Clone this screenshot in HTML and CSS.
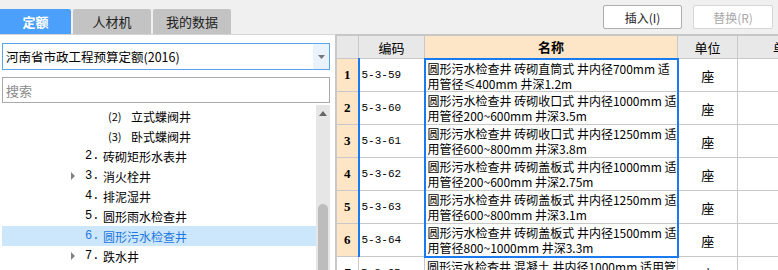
FILE: index.html
```html
<!DOCTYPE html>
<html lang="zh">
<head>
<meta charset="utf-8">
<link rel="stylesheet" href="styles.css">
</head>
<body>
<div class="app">
  <div class="left">
    <div class="tabs">
      <div class="tab active">定额</div>
      <div class="tab">人材机</div>
      <div class="tab">我的数据</div>
    </div>
    <div class="panel">
      <div class="select">
        <span class="select-text">河南省市政工程预算定额(2016)</span>
        <span class="select-btn"><svg width="7" height="4" viewBox="0 0 7 4"><path d="M0 0h7L3.5 4z" fill="#777"/></svg></span>
      </div>
      <div class="search">搜索</div>
      <div class="tree-wrap">
        <div class="tree">
          <div class="node sub"><span class="num">(2)</span><span>立式蝶阀井</span></div>
          <div class="node sub"><span class="num">(3)</span><span>卧式蝶阀井</span></div>
          <div class="node"><span class="arrow"></span><span class="num">2.</span><span>砖砌矩形水表井</span></div>
          <div class="node"><span class="arrow on"></span><span class="num">3.</span><span>消火栓井</span></div>
          <div class="node"><span class="arrow"></span><span class="num">4.</span><span>排泥湿井</span></div>
          <div class="node"><span class="arrow"></span><span class="num">5.</span><span>圆形雨水检查井</span></div>
          <div class="node selected"><span class="arrow"></span><span class="num">6.</span><span>圆形污水检查井</span></div>
          <div class="node"><span class="arrow on"></span><span class="num">7.</span><span>跌水井</span></div>
          <div class="node"><span class="arrow"></span><span class="num">8.</span><span>污水闸槽井</span></div>
        </div>
        <div class="scrollbar">
          <svg class="up" width="8" height="5" viewBox="0 0 8 5"><path d="M0 5L4 0l4 5z" fill="#666"/></svg>
          <div class="thumb"></div>
        </div>
      </div>
    </div>
  </div>
  <div class="right">
    <div class="toolbar">
      <button class="btn">插入(I)</button>
      <button class="btn disabled">替换(R)</button>
    </div>
    <div class="grid-wrap">
      <table class="grid">
        <colgroup>
          <col class="c-rn"><col class="c-code"><col class="c-name"><col class="c-unit"><col class="c-extra">
        </colgroup>
        <thead>
          <tr><th></th><th>编码</th><th class="h-name">名称</th><th>单位</th><th class="h-extra">单</th></tr>
        </thead>
        <tbody>
          <tr class="sel first"><td class="rn">1</td><td class="code">5-3-59</td><td class="name">圆形污水检查井 砖砌直筒式 井内径700mm 适用管径≤400mm 井深1.2m</td><td class="unit">座</td><td></td></tr>
          <tr class="sel"><td class="rn">2</td><td class="code">5-3-60</td><td class="name">圆形污水检查井 砖砌收口式 井内径1000mm 适用管径200~600mm 井深3.5m</td><td class="unit">座</td><td></td></tr>
          <tr class="sel"><td class="rn">3</td><td class="code">5-3-61</td><td class="name">圆形污水检查井 砖砌收口式 井内径1250mm 适用管径600~800mm 井深3.8m</td><td class="unit">座</td><td></td></tr>
          <tr class="sel"><td class="rn">4</td><td class="code">5-3-62</td><td class="name">圆形污水检查井 砖砌盖板式 井内径1000mm 适用管径200~600mm 井深2.75m</td><td class="unit">座</td><td></td></tr>
          <tr class="sel"><td class="rn">5</td><td class="code">5-3-63</td><td class="name">圆形污水检查井 砖砌盖板式 井内径1250mm 适用管径600~800mm 井深3.1m</td><td class="unit">座</td><td></td></tr>
          <tr class="sel last"><td class="rn">6</td><td class="code">5-3-64</td><td class="name">圆形污水检查井 砖砌盖板式 井内径1500mm 适用管径800~1000mm 井深3.3m</td><td class="unit">座</td><td></td></tr>
          <tr class="plain"><td class="rn">7</td><td class="code">5-3-65</td><td class="name">圆形污水检查井 混凝土 井内径1000mm 适用管径200~600mm 井深2.5m</td><td class="unit">座</td><td></td></tr>
        </tbody>
      </table>
    </div>
  </div>
</div>
</body>
</html>
```

FILE: styles.css
```css
* { box-sizing: border-box; }
html, body {
  margin: 0;
  padding: 0;
  width: 778px;
  height: 270px;
  overflow: hidden;
  background: #f0f0f0;
  font-family: "Noto Sans CJK SC", "DejaVu Sans", sans-serif;
  font-size: 12px;
  color: #000;
}
.app {
  display: flex;
  height: 270px;
}
.left {
  width: 336px;
  flex: none;
  display: flex;
  flex-direction: column;
}
.tabs {
  height: 34px;
  padding-top: 9px;
  display: flex;
  gap: 2px;
  align-items: stretch;
}
.tab {
  width: 78px;
  background: #c3c3c3;
  display: flex;
  align-items: center;
  justify-content: center;
  font-size: 13px;
  color: #222;
  border-top-left-radius: 2px;
  border-top-right-radius: 2px;
}
.tab.active {
  width: 71px;
  background: #4aa0fb;
  color: #fff;
  font-weight: bold;
  border-radius: 0 2px 0 0;
}
.panel {
  flex: 1;
  background: #fff;
  border-top: 1px solid #d6d6d6;
  border-right: 1px solid #c8c8c8;
  padding: 8px 5px 0 2px;
  display: flex;
  flex-direction: column;
  min-height: 0;
}
.select {
  height: 27px;
  border: 1px solid #5aa3ee;
  display: flex;
  align-items: stretch;
}
.select-text {
  flex: 1;
  padding-left: 3px;
  display: flex;
  align-items: center;
  font-size: 12.5px;
}
.select-btn {
  width: 16px;
  background: #eaf2fc;
  display: flex;
  align-items: center;
  justify-content: center;
}
.search {
  margin-top: 7px;
  height: 26px;
  border: 1px solid #a9a9a9;
  color: #8a8a8a;
  padding-left: 3px;
  display: flex;
  align-items: center;
  font-size: 13px;
}
.tree-wrap {
  flex: 1;
  display: flex;
  margin-top: 2px;
  min-height: 0;
  overflow: hidden;
}
.tree {
  flex: 1;
  padding-top: 1px;
}
.node {
  height: 20px;
  display: flex;
  align-items: center;
  padding-left: 67px;
  white-space: nowrap;
}
.node .arrow {
  width: 16px;
  height: 20px;
  display: flex;
  align-items: center;
}
.node .arrow.on::before {
  content: "";
  display: block;
  width: 0;
  height: 0;
  border-left: 4px solid #808080;
  border-top: 4px solid transparent;
  border-bottom: 4px solid transparent;
  margin-left: 2px;
}
.node .num {
  width: 18px;
  font-family: "Liberation Mono", monospace;
  font-size: 12px;
}
.node.sub {
  padding-left: 106px;
}
.node.sub .num {
  width: 23px;
  font-family: "Noto Sans CJK SC", sans-serif;
  font-size: 11px;
}
.node.selected {
  background: #cce6fb;
  color: #1e78e0;
}
.scrollbar {
  width: 14px;
  flex: none;
  background: #e6e6e6;
  display: flex;
  flex-direction: column;
  align-items: center;
  padding-top: 6px;
}
.thumb {
  margin-top: 88px;
  width: 10px;
  flex: 1;
  background: #bdbdbd;
  border-radius: 5px 5px 0 0;
}
.right {
  flex: 1;
  display: flex;
  flex-direction: column;
  min-width: 0;
}
.toolbar {
  height: 34px;
  display: flex;
  justify-content: flex-end;
  align-items: flex-start;
  gap: 11px;
  padding: 5px 5px 0 0;
}
.btn {
  width: 79px;
  height: 24px;
  background: #fff;
  border: 1px solid #adadad;
  border-radius: 2px;
  font-family: "Noto Sans CJK SC", sans-serif;
  font-size: 12px;
  color: #222;
  padding: 0;
}
.btn.disabled {
  width: 80px;
  border-color: #d6d6d6;
  color: #a8a8a8;
}
.grid-wrap {
  flex: 1;
  background: #fff;
  overflow: hidden;
  border-top: 1px solid #c6c6c6;
}
.grid {
  border-collapse: collapse;
  table-layout: fixed;
  width: 460px;
}
.c-rn { width: 22px; }
.c-code { width: 66px; }
.c-name { width: 253px; }
.c-unit { width: 60px; }
.c-extra { width: 59px; }
.grid th, .grid td {
  border: 1px solid #c8c8c8;
  padding: 0;
  overflow: hidden;
}
.grid th {
  height: 23px;
  background: #e8e8e8;
  font-weight: normal;
  font-size: 13px;
  text-align: center;
  white-space: nowrap;
}
.grid th.h-name {
  background: #fde6c8;
  font-weight: bold;
}
.grid th.h-extra { text-align: left; padding-left: 35px; }
.grid td {
  height: 33px;
  vertical-align: middle;
}
.grid td.rn {
  background: #fde5c6;
  text-align: center;
  font-family: "Liberation Serif", serif;
  font-weight: bold;
  font-size: 13px;
}
.grid tr.plain td.rn { background: #fff; }
.grid td.code {
  padding-left: 2px;
  vertical-align: middle;
  font-family: "Liberation Mono", monospace;
  font-size: 11px;
  white-space: nowrap;
}
.grid td.name {
  padding: 1px 0 0 2px;
  vertical-align: top;
  line-height: 15px;
  font-size: 12px;
  word-break: break-all;
}
.grid td.unit {
  text-align: center;
  font-size: 13px;
}
.grid tr.sel td.code { border-left: 2px solid #1a7af0; }
.grid tr.sel td.name {
  border-left: 2px solid #1a7af0;
  border-right: 2px solid #1a7af0;
}
.grid tr.first td.name { border-top: 2px solid #1a7af0; }
.grid tr.last td.name { border-bottom: 2px solid #1a7af0; }
```
